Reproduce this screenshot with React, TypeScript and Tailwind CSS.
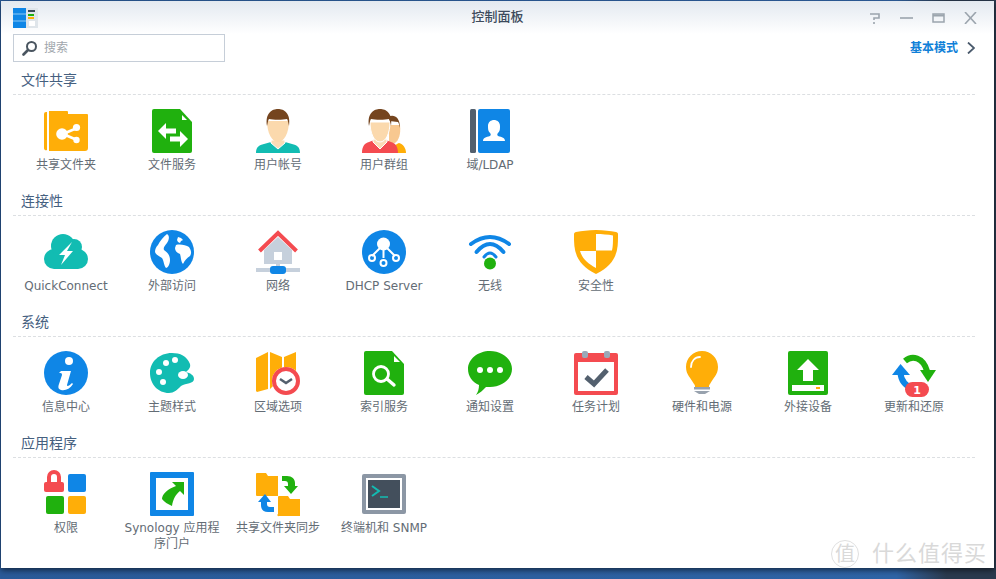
import type { ReactNode } from "react";

const BLUE = "#0f86e6";
const GREEN = "#20b10e";
const AMBER = "#ffae08";
const RED = "#f44b50";
const TEAL = "#12bcb2";

function Ic({ children }: { children: ReactNode }) {
  return (
    <svg width="44" height="44" viewBox="0 0 44 44" className="block overflow-visible">
      {children}
    </svg>
  );
}

const SharedFolder = () => (
  <Ic>
    <path d="M0 5a2 2 0 0 1 2-2h1v38a2 2 0 0 1-3-2zM5 2h18a1 1 0 0 1 1 1v2h19a1 1 0 0 1 1 1v33a3 3 0 0 1-3 3H5z" fill={AMBER} />
    <path d="M19 25 33 19M19 25l14 6" stroke="#fff" strokeWidth="2.6" />
    <circle cx="18" cy="25" r="5.8" fill="#fff" />
    <circle cx="32.5" cy="18.5" r="3.6" fill="#fff" />
    <circle cx="32.5" cy="31" r="3.2" fill="#fff" />
  </Ic>
);

const FileService = () => (
  <Ic>
    <path d="M4 0h26l12 13v29a2 2 0 0 1-2 2H4a2 2 0 0 1-2-2V2a2 2 0 0 1 2-2z" fill={GREEN} />
    <path d="M32 6l5 5h-5z" fill="#fff" />
    <path d="M8 22l8-8v5.500h10v5H16v5.500zM38 30l-8 8v-5.500H20v-5h10V22z" fill="#fff" />
  </Ic>
);

const User = () => (
  <Ic>
    <path d="M0 44c0-6 3-8 8-9l7-2h14l7 2c5 1 8 3 8 9z" fill={TEAL} />
    <path d="M15 31h14v3l-7 6-7-6z" fill="#fbdcb6" stroke="#fff" strokeWidth="1" />
    <path d="M11 12c0 12 5 21 11 21s11-9 11-21z" fill="#fbd9ad" />
    <path d="M11 17C9 4 16 0 22 0s13 4 11 17c-1-4-1-6-2-7-4 1-14 1-18 0-1 1-1 3-2 7z" fill="#75451f" />
  </Ic>
);

const UserGroup = () => (
  <Ic>
    <path d="M30 44c0-6 4-9 7-10 4 1 7 5 7 10z" fill={AMBER} />
    <path d="M27 16h11c1 9-1 15-5 18l-6 2z" fill="#f8c890" />
    <path d="M26 8c5-3 12-1 12 11-1-3-1-5-2-6-3 0-6-1-8-1z" fill="#75451f" />
    <path d="M0 44c0-7 3-10 7-11l5-2h12l5 2c4 1 7 4 7 11z" fill={RED} />
    <path d="M11 30h14v3l-7 7-7-7z" fill="#fbdcb6" stroke="#fff" strokeWidth="1" />
    <path d="M8 13c0 11 4 20 10 20s10-9 10-20z" fill="#fbd9ad" stroke="#fff" strokeWidth="1" />
    <path d="M7 17C5 4 12 0 18 0s13 4 11 17c-1-4-1-6-2-7-4 1-14 1-18 0-1 1-1 3-2 7z" fill="#75451f" />
  </Ic>
);

const Domain = () => (
  <Ic>
    <rect x="2" y="0" width="6" height="44" rx="1.5" fill="#53606e" />
    <rect x="10" y="0" width="32" height="44" rx="2" fill={BLUE} />
    <path d="M15 32c0-3 3-4 7-5 1-1 1-2 0-3-2-2-2-4-2-7 0-4 3-6 6-6s6 2 6 6c0 3 0 5-2 7-1 1-1 2 0 3 4 1 7 2 7 5z" fill="#fff" />
  </Ic>
);

const QuickConnect = () => (
  <Ic>
    <g fill={TEAL}>
      <circle cx="10" cy="29" r="10" />
      <circle cx="34" cy="29" r="10" />
      <circle cx="19" cy="16" r="12" />
      <circle cx="30" cy="17" r="8" />
      <rect x="10" y="20" width="24" height="19" />
    </g>
    <path d="M28 12 15 25h6l-4 10 12-14h-6z" fill="#fff" />
  </Ic>
);

const Globe = () => (
  <Ic>
    <circle cx="22" cy="22" r="22" fill={BLUE} />
    <path d="M17 4C20 6 19 10 17 13C15 16 13 17 14 20C17 22 20 25 20 30C20 34 18 38 16 38C14 36 14 31 12 28C9 26 6 25 5 22C5 19 6 17 8 15C10 11 13 7 17 4Z" fill="#fff" />
    <path d="M26 15C30 14 36 15 39 17C41 20 42 23 40 26C37 28 35 30 33 34C31 32 31 27 30 24C27 23 25 21 25 18Z" fill="#fff" />
    <path d="M28 7l3 1 2 2-2 1-1 2-2-1-1-2z" fill="#fff" />
  </Ic>
);

const Network = () => (
  <Ic>
    <path d="M8 20 22 7l14 13v14H8z" fill="#c6d0dc" />
    <rect x="18" y="22" width="8" height="8" fill="#fff" />
    <rect x="20" y="34" width="4" height="4" fill="#c6d0dc" />
    <path d="M3.500 21 22 3l18.500 18" fill="none" stroke={RED} strokeWidth="4" />
    <rect x="0" y="38" width="44" height="4" fill="#c6d0dc" />
    <rect x="14" y="36" width="16" height="8" rx="3" fill={BLUE} />
  </Ic>
);

const Dhcp = () => (
  <Ic>
    <circle cx="22" cy="22" r="22" fill={BLUE} />
    <circle cx="21.5" cy="14" r="6.5" fill="#fff" />
    <g fill="none" stroke="#fff" strokeWidth="2">
      <path d="M21.5 18v10M18 18l-8 8M25 18l8 8" />
      <circle cx="10" cy="28" r="3" />
      <circle cx="21.5" cy="33" r="3" />
      <circle cx="34" cy="28" r="3" />
    </g>
  </Ic>
);

const Wireless = () => (
  <Ic>
    <g fill="none" stroke={BLUE} strokeLinecap="round" strokeWidth="4">
      <path d="M3 14Q22 0 41 14" />
      <path d="M8.500 22Q22 6 35.500 22" />
      <path d="M16 27Q22 19 28 27" strokeWidth="3" />
    </g>
    <circle cx="22" cy="33.500" r="6" fill={GREEN} />
  </Ic>
);

const Security = () => (
  <Ic>
    <path d="M22 0c8 0 14 1 20 2 2 1 2 1 2 3 0 14 0 28-22 39C0 33 0 19 0 5c0-2 0-2 2-3 6-1 12-2 20-2z" fill={AMBER} />
    <path d="M22 4c6 0 12 .5 17 1.500 0 6 0 11-1 15H22zM22 21v17C13 33 8 28 6 21z" fill="#fff" />
  </Ic>
);

const InfoCenter = () => (
  <Ic>
    <circle cx="22" cy="22" r="22" fill={BLUE} />
    <circle cx="25" cy="10" r="4" fill="#fff" />
    <path d="M17 20h10l-4 14c0 2 2 1 5-2l1 1c-3 5-8 7-12 6-3-1-3-3-2-6l3-9c0-2-1-2-3-2z" fill="#fff" />
  </Ic>
);

const Theme = () => (
  <Ic>
    <path d="M22 2c8 0 15 3 18 11 1 4-2 6-4 8 4 1 8 3 8 7 0 5-8 4-13 7-4 4-7 7-12 7C8 42 0 33 0 22 0 11 9 2 22 2z" fill={TEAL} />
    <circle cx="16" cy="12" r="3" fill="#fff" />
    <circle cx="25" cy="9" r="3" fill="#fff" />
    <circle cx="9" cy="21" r="3" fill="#fff" />
    <circle cx="13" cy="31" r="3" fill="#fff" />
    <ellipse cx="33" cy="24" rx="5" ry="4" fill="#fff" />
  </Ic>
);

const Region = () => (
  <Ic>
    <path d="M0 7l12-6v37L1 41l-1-1zM14 1l12 5v20l-12 12zM28 6l12-5v22l-12 8z" fill={AMBER} />
    <circle cx="30" cy="30" r="14" fill="#fff" />
    <circle cx="30" cy="30" r="12" fill="none" stroke={RED} strokeWidth="4" />
    <path d="M24 28l6 4 6-4" fill="none" stroke="#53606e" strokeWidth="2.5" />
  </Ic>
);

const IndexService = () => (
  <Ic>
    <path d="M4 0h26l12 13v29a2 2 0 0 1-2 2H4a2 2 0 0 1-2-2V2a2 2 0 0 1 2-2z" fill={GREEN} />
    <path d="M32 5l6 6h-6z" fill="#fff" />
    <circle cx="19" cy="23" r="7.500" fill="none" stroke="#fff" strokeWidth="2.800" />
    <path d="M25 28l7 6" stroke="#fff" strokeWidth="3.400" strokeLinecap="round" />
  </Ic>
);

const Notify = () => (
  <Ic>
    <path d="M22 0c12 0 22 8 22 18S34 36 22 36h-4c-3 3-6 6-10 8 2-3 3-6 3-10C4 31 0 25 0 18 0 8 10 0 22 0z" fill={GREEN} />
    <circle cx="12" cy="19" r="3" fill="#fff" />
    <circle cx="22" cy="19" r="3" fill="#fff" />
    <circle cx="32" cy="19" r="3" fill="#fff" />
  </Ic>
);

const Task = () => (
  <Ic>
    <rect x="0" y="2" width="44" height="42" rx="2" fill={RED} />
    <rect x="4" y="11" width="36" height="29" fill="#fff" />
    <rect x="8" y="0" width="6" height="7" rx="2" fill="#9aa8b8" />
    <rect x="30" y="0" width="6" height="7" rx="2" fill="#9aa8b8" />
    <path d="M12 26l8 7 13-14" fill="none" stroke="#53606e" strokeWidth="5" />
  </Ic>
);

const Bulb = () => (
  <Ic>
    <path d="M22 0c9 0 16 7 16 16 0 8-5 11-8 17-1 1-1 2-1 3H15c0-1 0-2-1-3-3-6-8-9-8-17C6 7 13 0 22 0z" fill={AMBER} />
    <path d="M11 16c0-6 4-10 9-10" fill="none" stroke="#fff" strokeWidth="1.800" strokeLinecap="round" />
    <rect x="14" y="36" width="16" height="2.500" fill="#98a2ae" />
    <path d="M14 40h16l-5 3h-6z" fill="#98a2ae" />
  </Ic>
);

const External = () => (
  <Ic>
    <rect x="2" y="0" width="40" height="44" rx="2" fill={GREEN} />
    <path d="M22 8l11 11h-6v11H17V19h-6z" fill="#fff" />
    <rect x="6" y="34" width="32" height="6" fill="#fff" />
    <rect x="30" y="36" width="4" height="2" fill={AMBER} />
  </Ic>
);

const Update = () => (
  <Ic>
    <path d="M13 10C20 4 31 6 35 20" fill="none" stroke={GREEN} strokeWidth="6" />
    <path d="M28 19h16l-8 12z" fill={GREEN} />
    <path d="M8.500 22C9 30 14 35 21 38" fill="none" stroke={BLUE} strokeWidth="6" />
    <path d="M0 24 8.500 13 18 24z" fill={BLUE} />
    <rect x="13" y="31" width="24" height="15" rx="7.500" fill={RED} />
    <text x="25" y="42.500" textAnchor="middle" fontSize="11" fontWeight="700" fill="#fff">1</text>
  </Ic>
);

const Permission = () => (
  <Ic>
    <path d="M5 11V5a5 5 0 0 1 10 0v6" fill="none" stroke={RED} strokeWidth="4" />
    <rect x="0" y="10" width="20" height="10" rx="2" fill={RED} />
    <rect x="24" y="2" width="18" height="18" rx="2" fill={BLUE} />
    <rect x="2" y="24" width="18" height="18" rx="2" fill={GREEN} />
    <rect x="24" y="24" width="18" height="18" rx="2" fill={AMBER} />
  </Ic>
);

const Portal = () => (
  <Ic>
    <rect x="0" y="0" width="44" height="44" rx="1" fill={BLUE} />
    <rect x="6" y="6" width="32" height="32" fill="#fff" />
    <path d="M22 10H34V23L30 19C26 22 23 27 22 34C18 32 14 30 12 27C12 22 18 17 26 14Z" fill={GREEN} />
  </Ic>
);

const FolderSync = () => (
  <Ic>
    <path d="M0 2a1 1 0 0 1 1-1h9l2 3h10v20H1a1 1 0 0 1-1-1zM22 25a1 1 0 0 1 1-1h9l2 3h10v17H23a1 1 0 0 1-1-2z" fill={AMBER} />
    <path d="M26 4h5c5 0 8 3 8 7v3h3l-7 8-7-8h4v-2c0-2-1-3-3-3h-3z" fill={GREEN} />
    <path d="M18 40h-6c-5 0-7-3-7-7v-3H2l7-8 6 8h-4v2c0 2 1 3 3 3h4z" fill={BLUE} />
  </Ic>
);

const Terminal = () => (
  <Ic>
    <rect x="0" y="2" width="44" height="40" rx="2" fill="#8c97a5" />
    <rect x="4" y="6" width="36" height="32" fill="#fff" />
    <rect x="6" y="8" width="32" height="28" fill="#434f5c" />
    <path d="M10 14l7 5-7 5" fill="none" stroke={TEAL} strokeWidth="2" />
    <path d="M18 25h8" stroke={TEAL} strokeWidth="1.500" />
  </Ic>
);

const sections = [
  {
    title: "文件共享",
    items: [
      ["共享文件夹", SharedFolder],
      ["文件服务", FileService],
      ["用户帐号", User],
      ["用户群组", UserGroup],
      ["域/LDAP", Domain],
    ],
  },
  {
    title: "连接性",
    items: [
      ["QuickConnect", QuickConnect],
      ["外部访问", Globe],
      ["网络", Network],
      ["DHCP Server", Dhcp],
      ["无线", Wireless],
      ["安全性", Security],
    ],
  },
  {
    title: "系统",
    items: [
      ["信息中心", InfoCenter],
      ["主题样式", Theme],
      ["区域选项", Region],
      ["索引服务", IndexService],
      ["通知设置", Notify],
      ["任务计划", Task],
      ["硬件和电源", Bulb],
      ["外接设备", External],
      ["更新和还原", Update],
    ],
  },
  {
    title: "应用程序",
    items: [
      ["权限", Permission],
      ["Synology 应用程序门户", Portal],
      ["共享文件夹同步", FolderSync],
      ["终端机和 SNMP", Terminal],
    ],
  },
] as const;

export default function App() {
  return (
    <div className="w-[996px] h-[579px] overflow-hidden relative bg-gradient-to-r from-[#2a5a98] via-[#2f64a6] via-90% to-[#2a3a4e] to-95% font-['DejaVu_Sans','Noto_Sans_CJK_SC',sans-serif]">
      <div className="w-[993px] h-[567px] ml-px mt-px bg-white shadow-[0_2px_6px_rgba(0,0,0,0.6)]">
        {/* Title bar */}
        <div className="h-[33px] flex items-center justify-between pl-3 pr-[17px] bg-gradient-to-b from-[#e3e9f0] to-white relative">
          <svg width="25" height="20" viewBox="0 0 25 20" className="block">
            <rect width="13" height="20" fill={BLUE} />
            <path d="M0 6h13M0 13h13" stroke="#8cc8f5" strokeWidth="1" />
            <rect x="13" width="12" height="20" fill="#dfe5ea" />
            <rect x="15" y="2" width="7" height="2" fill="#3c4a58" />
            <rect x="15" y="6" width="6" height="2" fill={GREEN} />
            <rect x="15" y="9" width="6" height="2" fill={AMBER} />
            <rect x="16" y="13" width="6" height="5" fill="#fff" />
          </svg>
          <span className="absolute left-0 right-0 text-center text-[13px] font-medium text-[#3d4b5c] -mt-[2px]">控制面板</span>
          <div className="flex items-center gap-[19px] text-[#9ba4ad]">
            <svg width="12" height="12" viewBox="0 0 12 12" fill="none" stroke="currentColor" strokeWidth="1.600">
              <path d="M1 2h9v4H5v2M5 10v2" />
            </svg>
            <svg width="13" height="12" viewBox="0 0 13 12" fill="none" stroke="currentColor" strokeWidth="1.600">
              <path d="M0 6h13" />
            </svg>
            <svg width="13" height="12" viewBox="0 0 13 12" fill="none" stroke="currentColor">
              <rect x="1" y="2" width="11" height="8" strokeWidth="1.500" />
              <path d="M1 3.500h11" strokeWidth="2" />
            </svg>
            <svg width="13" height="12" viewBox="0 0 13 12" fill="none" stroke="currentColor" strokeWidth="1.600">
              <path d="M1 0l11 12M12 0 1 12" />
            </svg>
          </div>
        </div>

        {/* Search row */}
        <div className="h-[28px] flex items-center justify-between pl-3 pr-[19px]">
          <div className="w-[212px] h-[28px] border border-[#c6ced8] flex items-center pl-2 gap-[6px]">
            <svg width="16" height="16" viewBox="0 0 16 16" fill="none" stroke="#4a5560">
              <circle cx="9.500" cy="6.500" r="4.500" strokeWidth="2" />
              <path d="M6 10l-4.500 4.500" strokeWidth="2.600" strokeLinecap="round" />
            </svg>
            <span className="text-xs text-[#a0a6ac]">搜索</span>
          </div>
          <div className="flex items-center gap-[9px]">
            <span className="text-xs font-bold text-[#0f7fd8]">基本模式</span>
            <svg width="8" height="12" viewBox="0 0 8 12" fill="none" stroke="#4a5a6c" strokeWidth="1.800">
              <path d="M1 0.500 7 6l-6 5.500" />
            </svg>
          </div>
        </div>

        {/* Sections */}
        <div className="mt-1">
          {sections.map((section) => (
            <section key={section.title} className="h-[121px] pl-3 pr-[19px]">
              <h2 className="h-[29px] pl-2 pt-[5px] text-sm leading-[18px] text-[#45607f] border-b border-dashed border-[#dcdfe2]">
                {section.title}
              </h2>
              <div className="flex pt-[14px]">
                {section.items.map(([label, Icon]) => (
                  <div key={label} className="w-[106px] flex flex-col items-center">
                    <Icon />
                    <span className="mt-1 w-[106px] text-center text-xs leading-[16px] text-[#636c75]">
                      {label}
                    </span>
                  </div>
                ))}
              </div>
            </section>
          ))}
        </div>
      </div>

      {/* Watermark */}
      <div className="absolute left-[831px] top-[540px] flex items-center gap-[13px] text-[#d9d9d9]">
        <span className="w-[28px] h-[28px] rounded-full border border-[#e0e0e0] flex items-center justify-center text-[20px] leading-none">值</span>
        <span className="text-[22px] leading-none tracking-[1px]">什么值得买</span>
      </div>
    </div>
  );
}
